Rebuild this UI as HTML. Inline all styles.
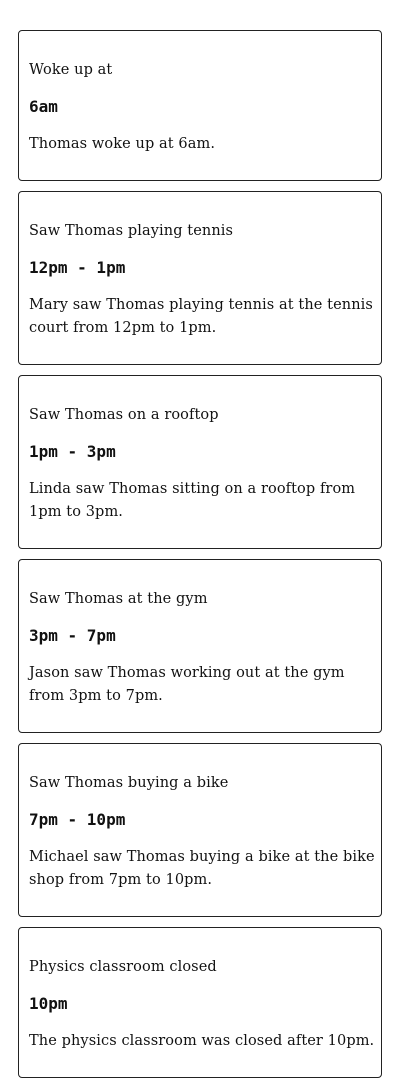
<!DOCTYPE html>
<html><head><meta charset="utf-8"><style>
body{margin:0;background:#fff;width:400px;height:1088px;overflow:hidden}
.wrap{padding-top:30px}
.card{box-sizing:border-box;margin:0 18px 10px 18px;width:364px;border:1px solid #222;border-radius:4px;padding:28px 10px 24px 10px;color:#111}
.t,.d{font-family:"DejaVu Serif","Liberation Serif",serif;font-size:14.5px;line-height:23px;white-space:nowrap;letter-spacing:0.1px}
.t{margin-bottom:13px}
.m{font-family:"DejaVu Sans Mono","Liberation Mono",monospace;font-weight:bold;font-size:16px;line-height:23px;margin-bottom:15px}
</style></head><body><div class="wrap">
<div class="card" style="height:151px"><div class="t">Woke up at</div><div class="m">6am</div><div class="d">Thomas woke up at 6am.</div></div>
<div class="card" style="height:174px"><div class="t">Saw Thomas playing tennis</div><div class="m">12pm - 1pm</div><div class="d">Mary saw Thomas playing tennis at the tennis<br>court from 12pm to 1pm.</div></div>
<div class="card" style="height:174px"><div class="t">Saw Thomas on a rooftop</div><div class="m">1pm - 3pm</div><div class="d">Linda saw Thomas sitting on a rooftop from<br>1pm to 3pm.</div></div>
<div class="card" style="height:174px"><div class="t">Saw Thomas at the gym</div><div class="m">3pm - 7pm</div><div class="d">Jason saw Thomas working out at the gym<br>from 3pm to 7pm.</div></div>
<div class="card" style="height:174px"><div class="t">Saw Thomas buying a bike</div><div class="m">7pm - 10pm</div><div class="d">Michael saw Thomas buying a bike at the bike<br>shop from 7pm to 10pm.</div></div>
<div class="card" style="height:151px"><div class="t">Physics classroom closed</div><div class="m">10pm</div><div class="d">The physics classroom was closed after 10pm.</div></div>
</div></body></html>
